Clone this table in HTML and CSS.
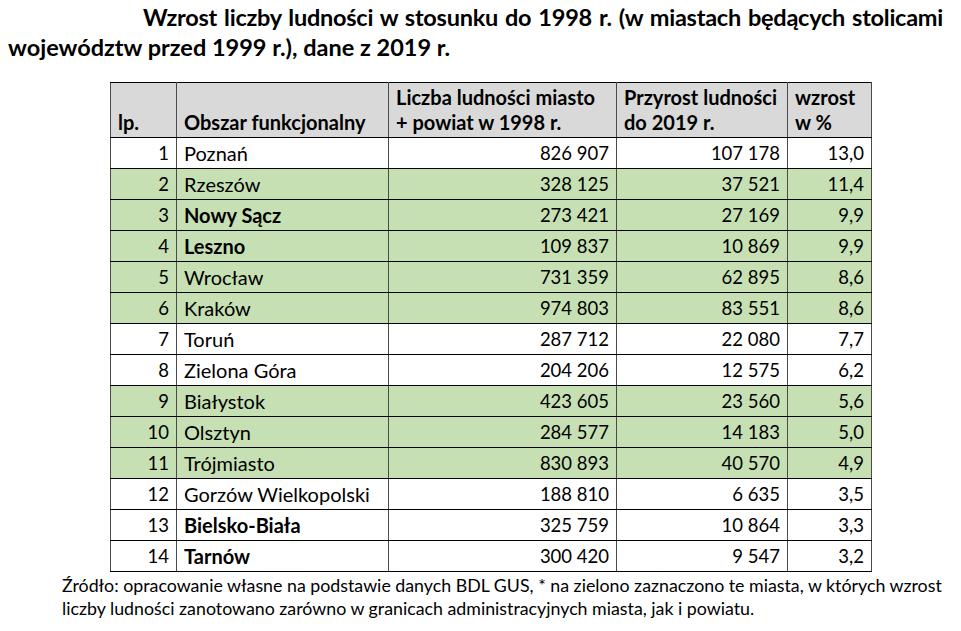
FILE: index.html
```html
<!DOCTYPE html>
<html lang="pl">
<head>
<meta charset="utf-8">
<link rel="stylesheet" href="styles.css">
</head>
<body>
<h1 class="title"><span class="title-first">Wzrost liczby ludności w stosunku do 1998 r. (w miastach będących stolicami</span> <span class="title-rest">województw przed 1999 r.), dane z 2019 r.</span></h1>
<table class="data">
  <colgroup>
    <col class="c-lp"><col class="c-name"><col class="c-pop"><col class="c-inc"><col class="c-pct">
  </colgroup>
  <thead>
    <tr>
      <th>lp.</th>
      <th>Obszar funkcjonalny</th>
      <th>Liczba ludności miasto<br>+ powiat w 1998 r.</th>
      <th>Przyrost ludności<br>do 2019 r.</th>
      <th>wzrost<br>w %</th>
    </tr>
  </thead>
  <tbody>
    <tr><td class="num">1</td><td>Poznań</td><td class="num">826 907</td><td class="num">107 178</td><td class="num">13,0</td></tr>
    <tr class="green"><td class="num">2</td><td>Rzeszów</td><td class="num">328 125</td><td class="num">37 521</td><td class="num">11,4</td></tr>
    <tr class="green"><td class="num">3</td><td class="bold">Nowy Sącz</td><td class="num">273 421</td><td class="num">27 169</td><td class="num">9,9</td></tr>
    <tr class="green"><td class="num">4</td><td class="bold">Leszno</td><td class="num">109 837</td><td class="num">10 869</td><td class="num">9,9</td></tr>
    <tr class="green"><td class="num">5</td><td>Wrocław</td><td class="num">731 359</td><td class="num">62 895</td><td class="num">8,6</td></tr>
    <tr class="green"><td class="num">6</td><td>Kraków</td><td class="num">974 803</td><td class="num">83 551</td><td class="num">8,6</td></tr>
    <tr><td class="num">7</td><td>Toruń</td><td class="num">287 712</td><td class="num">22 080</td><td class="num">7,7</td></tr>
    <tr><td class="num">8</td><td>Zielona Góra</td><td class="num">204 206</td><td class="num">12 575</td><td class="num">6,2</td></tr>
    <tr class="green"><td class="num">9</td><td>Białystok</td><td class="num">423 605</td><td class="num">23 560</td><td class="num">5,6</td></tr>
    <tr class="green"><td class="num">10</td><td>Olsztyn</td><td class="num">284 577</td><td class="num">14 183</td><td class="num">5,0</td></tr>
    <tr class="green"><td class="num">11</td><td>Trójmiasto</td><td class="num">830 893</td><td class="num">40 570</td><td class="num">4,9</td></tr>
    <tr><td class="num">12</td><td>Gorzów Wielkopolski</td><td class="num">188 810</td><td class="num">6 635</td><td class="num">3,5</td></tr>
    <tr><td class="num">13</td><td class="bold">Bielsko-Biała</td><td class="num">325 759</td><td class="num">10 864</td><td class="num">3,3</td></tr>
    <tr><td class="num">14</td><td class="bold">Tarnów</td><td class="num">300 420</td><td class="num">9 547</td><td class="num">3,2</td></tr>
  </tbody>
</table>
<p class="note">Źródło: opracowanie własne na podstawie danych BDL GUS, * na zielono zaznaczono te miasta, w których wzrost liczby ludności zanotowano zarówno w granicach administracyjnych miasta, jak i powiatu.</p>
</body>
</html>
```

FILE: styles.css
```css
html, body {
  margin: 0;
  padding: 0;
  background: #fff;
  color: #000;
  font-family: Lato, "Noto Sans", "Liberation Sans", sans-serif;
}

.title {
  margin: 2px 0 0 8px;
  width: 935px;
  font-size: 23.5px;
  font-weight: 700;
  line-height: 30px;
}

.title-first {
  display: block;
  white-space: nowrap;
  letter-spacing: -0.25px;
  text-align: justify;
  text-align-last: justify;
  text-indent: 135px;
}

.title-rest {
  display: block;
}

.data {
  margin: 20px 0 0 110px;
  border-collapse: collapse;
  table-layout: fixed;
  width: 761px;
  font-size: 20px;
}

.c-lp { width: 66px; }
.c-name { width: 212px; }
.c-pop { width: 228px; }
.c-inc { width: 171px; }
.c-pct { width: 84px; }

.data th, .data td {
  border-top: 1px solid #000;
  border-bottom: 1px solid #000;
  border-left: 1px solid #4a4a4a;
  border-right: 1px solid #4a4a4a;
  padding: 0 7px;
  white-space: nowrap;
  overflow: hidden;
}

.data th {
  background: #d9d9d9;
  font-weight: 700;
  text-align: left;
  height: 52px;
  line-height: 25px;
  vertical-align: bottom;
  padding-bottom: 2px;
}

.data td {
  height: 30px;
  line-height: 30px;
}

.data .num {
  text-align: right;
  font-size: 18.5px;
}

.data .bold { font-weight: 700; }

.data tr.green td { background: #c6e0b4; }

.note {
  margin: 2px 0 0 62px;
  width: 886px;
  font-size: 17.8px;
  line-height: 23px;
}
```
